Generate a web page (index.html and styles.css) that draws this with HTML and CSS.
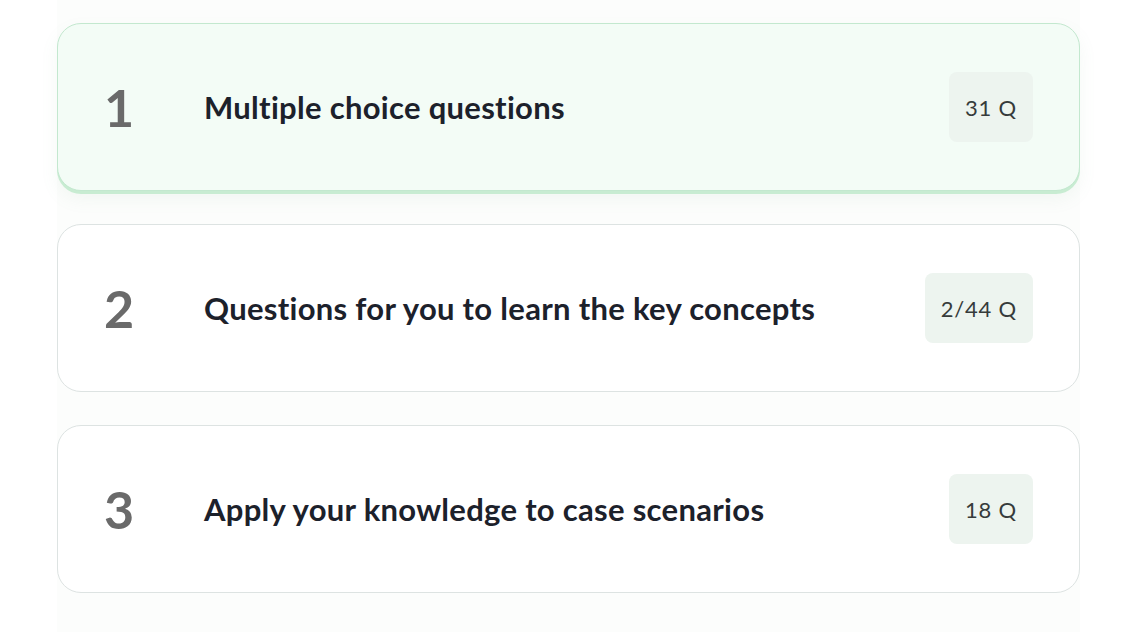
FILE: index.html
```html
<!DOCTYPE html>
<html lang="en">
<head>
    <meta charset="UTF-8">
    <meta name="viewport" content="width=device-width, initial-scale=1.0">
    <title>Question Sets</title>
    <link rel="stylesheet" href="styles.css">
</head>
<body>
    <div class="sets">
        <div class="set active">
            <span class="set-num">1</span>
            <span class="set-title">Multiple choice questions</span>
            <span class="set-count">31 Q</span>
        </div>
        <div class="set">
            <span class="set-num">2</span>
            <span class="set-title">Questions for you to learn the key concepts</span>
            <span class="set-count">2/44 Q</span>
        </div>
        <div class="set">
            <span class="set-num">3</span>
            <span class="set-title">Apply your knowledge to case scenarios</span>
            <span class="set-count">18 Q</span>
        </div>
    </div>
</body>
</html>
```

FILE: styles.css
```css
body {
    font-family: Lato, "Open Sans", sans-serif;
    margin: 0;
    background-color: #ffffff;
}

.sets {
    margin: 0 58px 0 57px;
    padding: 23px 0 40px;
    min-height: 632px;
    box-sizing: border-box;
    background-color: #fcfdfc;
    display: flex;
    flex-direction: column;
    gap: 33px;
}

.set {
    height: 168px;
    box-sizing: border-box;
    display: flex;
    align-items: center;
    padding: 0 46px;
    border: 1px solid #dde3e2;
    border-radius: 24px;
    background-color: #ffffff;
}

.set.active {
    background-color: #f3fcf6;
    border-color: #c3e8cf;
    box-shadow: 0 3px 0 #c8ecd2, 0 8px 18px rgba(120, 170, 130, 0.08);
}

.set-num {
    width: 100px;
    flex-shrink: 0;
    font-size: 52px;
    font-weight: 700;
    color: #6a6a6a;
}

.set-title {
    flex: 1;
    font-size: 31px;
    font-weight: 700;
    letter-spacing: 0.3px;
    color: #1c212b;
}

.set-count {
    display: flex;
    align-items: center;
    justify-content: center;
    height: 70px;
    padding: 0 16px;
    min-width: 81px;
    box-sizing: border-box;
    border-radius: 8px;
    background-color: #edf4ef;
    font-size: 22px;
    letter-spacing: 0.8px;
    color: #363b3b;
}
```
